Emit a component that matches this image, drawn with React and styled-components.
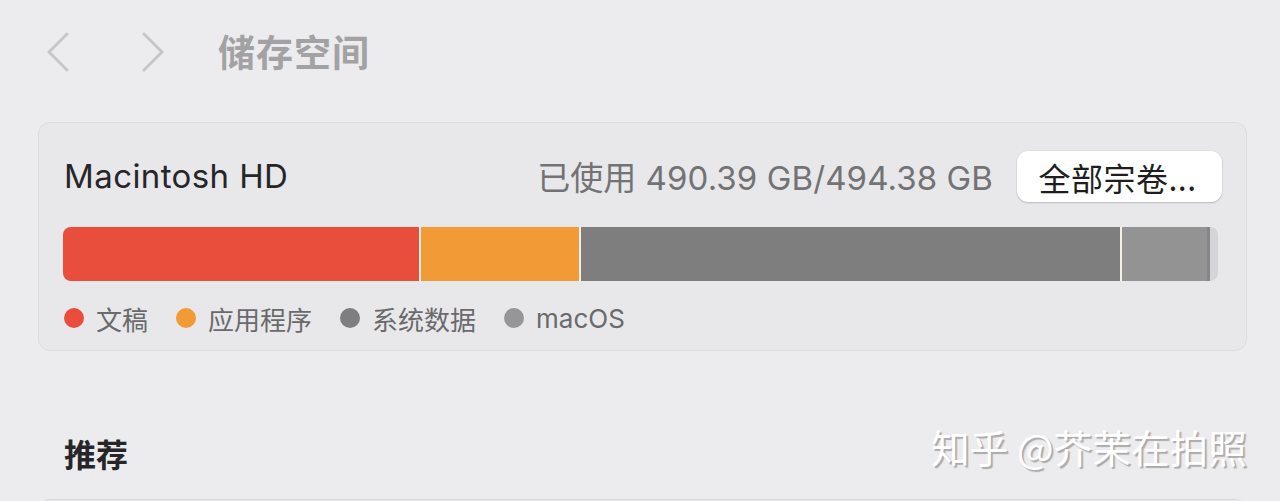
import React from "react";
import styled, { createGlobalStyle } from "styled-components";

const Global = createGlobalStyle`
  html, body { margin: 0; padding: 0; background: #ececee; }
  body { font-family: Inter, "Noto Sans CJK SC", sans-serif; overflow: hidden; }
`;

const Page = styled.div`
  position: relative;
  width: 1280px;
  height: 501px;
  box-sizing: border-box;
  padding: 0 33px 0 38px;
  background: #ececee;
  overflow: hidden;
`;

const Header = styled.div`
  display: flex;
  align-items: center;
  height: 104px;
  padding-left: 8px;
`;

const NavButton = styled.div`
  width: 24px;
  height: 40px;
  display: flex;
  align-items: center;
  justify-content: center;
  margin-right: ${(p) => p.$gap}px;
`;

const Title = styled.h1`
  margin: 0;
  font-family: "Noto Sans CJK SC", sans-serif;
  font-size: 37px;
  font-weight: 700;
  color: #a2a2a4;
  letter-spacing: 1px;
  line-height: 1;
  margin-top: -2px;
`;

const Card = styled.section`
  margin-top: 18px;
  height: 229px;
  box-sizing: border-box;
  border: 1px solid #dcdcde;
  border-radius: 12px;
  background: #e8e8ea;
  padding: 28px 25px 0 25px;
`;

const TopRow = styled.div`
  display: flex;
  align-items: center;
  height: 51px;
`;

const DiskName = styled.div`
  font-size: 33px;
  color: #262628;
  flex: 1;
  letter-spacing: 0.4px;
  margin-top: -2px;
`;

const Usage = styled.div`
  font-size: 33px;
  color: #737375;
  margin-right: 24px;
  letter-spacing: 0.1px;
  margin-top: -2px;
`;

const CjkSpan = styled.span`
  font-family: "Noto Sans CJK SC", sans-serif;
  letter-spacing: 0;
`;

const Button = styled.button`
  height: 51px;
  width: 205px;
  border: none;
  border-radius: 11px;
  background: #ffffff;
  box-shadow: 0 1px 2px rgba(0, 0, 0, 0.18), 0 0 0 0.5px rgba(0, 0, 0, 0.06);
  font-family: "Noto Sans CJK SC", sans-serif;
  font-size: 32px;
  color: #1e1e1e;
  padding: 0 4px 0 0;
  margin-right: -1px;
  letter-spacing: 0.5px;
`;

const Bar = styled.div`
  display: flex;
  margin: 25px 0 0 -1px;
  height: 54px;
  width: 1155px;
  border-radius: 8px;
  overflow: hidden;
  background: #d5d5d7;
`;

const Segment = styled.div`
  height: 100%;
  width: ${(p) => p.$w}px;
  background: ${(p) => p.$c};
  border-right: ${(p) => (p.$sep ? "2px solid #f4efe9" : "none")};
  flex-shrink: 0;
`;

const Legend = styled.div`
  display: flex;
  align-items: center;
  height: 30px;
  margin-top: 22px;
`;

const LegendItem = styled.div`
  display: flex;
  align-items: center;
  margin-right: 28px;
  font-family: "Noto Sans CJK SC", sans-serif;
  font-size: 26px;
  color: #6a6a6c;
`;

const LegendLatin = styled.span`
  font-family: Inter, sans-serif;
  font-size: 26px;
`;

const Dot = styled.span`
  width: 20px;
  height: 20px;
  border-radius: 50%;
  background: ${(p) => p.$c};
  margin-right: 12px;
`;

const SectionTitle = styled.h2`
  margin: 83px 0 0 26px;
  font-family: "Noto Sans CJK SC", sans-serif;
  font-size: 32px;
  font-weight: 700;
  color: #262628;
  line-height: 38px;
`;

const NextCard = styled.div`
  margin-top: 27px;
  height: 40px;
  border: 1px solid #d8d8da;
  border-radius: 12px;
  background: #e9e9eb;
`;

const Watermark = styled.div`
  position: absolute;
  right: 33px;
  top: 418px;
  font-family: "Noto Sans CJK SC", sans-serif;
  font-size: 38.7px;
  color: #ffffff;
  text-shadow: 2px 2px 1px rgba(0, 0, 0, 0.28);
`;

const Chevron = ({ dir }) => (
  <svg width="24" height="40" viewBox="0 0 24 40">
    <polyline
      points={dir === "left" ? "21,2 3,20 21,38" : "3,2 21,20 3,38"}
      fill="none"
      stroke="#c6c6c8"
      strokeWidth="3"
      strokeLinecap="round"
      strokeLinejoin="round"
    />
  </svg>
);

const segments = [
  { w: 356, c: "#e94e3c", sep: true },
  { w: 158, c: "#f19a36", sep: true },
  { w: 539, c: "#7f7e7e", sep: true },
  { w: 85, c: "#939393" },
  { w: 3, c: "#858585" },
];

const legend = [
  { c: "#e94e3c", t: "文稿" },
  { c: "#f19a36", t: "应用程序" },
  { c: "#7f7e7e", t: "系统数据" },
  { c: "#969696", t: "macOS", latin: true },
];

export default function App() {
  return (
    <Page>
      <Global />
      <Header>
        <NavButton $gap={71}>
          <Chevron dir="left" />
        </NavButton>
        <NavButton $gap={53}>
          <Chevron dir="right" />
        </NavButton>
        <Title>储存空间</Title>
      </Header>
      <Card>
        <TopRow>
          <DiskName>Macintosh HD</DiskName>
          <Usage>
            <CjkSpan>已使用</CjkSpan> 490.39 GB/494.38 GB
          </Usage>
          <Button>全部宗卷...</Button>
        </TopRow>
        <Bar>
          {segments.map((s, i) => (
            <Segment key={i} $w={s.w} $c={s.c} $sep={s.sep} />
          ))}
        </Bar>
        <Legend>
          {legend.map((l) => (
            <LegendItem key={l.t}>
              <Dot $c={l.c} />
              {l.latin ? <LegendLatin>{l.t}</LegendLatin> : l.t}
            </LegendItem>
          ))}
        </Legend>
      </Card>
      <SectionTitle>推荐</SectionTitle>
      <NextCard />
      <Watermark>知乎 @芥茉在拍照</Watermark>
    </Page>
  );
}
